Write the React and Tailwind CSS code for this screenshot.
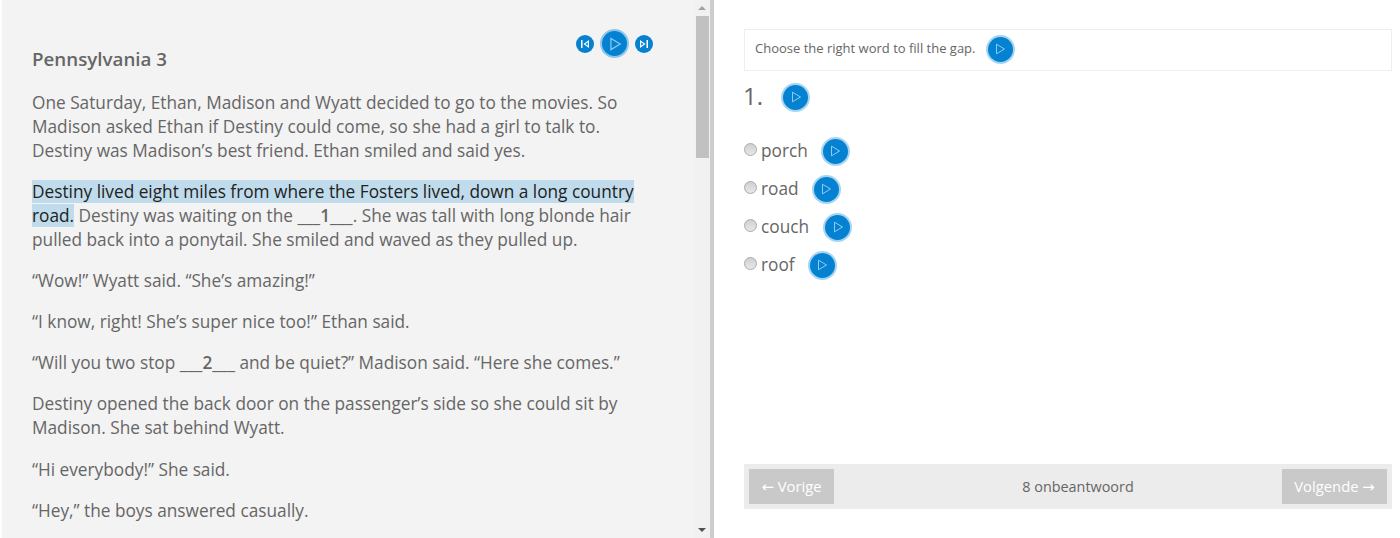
const font = { fontFamily: '"Open Sans", sans-serif' };
const arrowFont = { fontFamily: '"DejaVu Sans", sans-serif' };

const PlayIcon = ({ size = 12 }) => (
  <svg width={size} height={size} viewBox="0 0 12 12" fill="none" stroke="#8fcdf0" strokeWidth="1">
    <path d="M2.5 1.2 L10.5 6 L2.5 10.8 Z" />
  </svg>
);

const PlayButton = ({ className = '' }) => (
  <button className={`flex h-[29px] w-[29px] shrink-0 items-center justify-center rounded-full border-[2px] border-[#a5d5f0] bg-[#0482d1] ${className}`}>
    <PlayIcon />
  </button>
);

const SkipButton = ({ flip }) => (
  <button className="flex h-[18px] w-[18px] items-center justify-center rounded-full bg-[#0482d1]">
    <svg width="10" height="10" viewBox="0 0 10 10" fill="#fff" className={flip ? 'rotate-180' : ''}>
      <rect x="1" y="1" width="1.5" height="8" />
      <path d="M9 1 L9 9 L3.5 5 Z M7.8 3.2 L5.4 5 L7.8 6.8 Z" fillRule="evenodd" />
    </svg>
  </button>
);

const Story = () => (
  <div className="relative flex-1 overflow-hidden pl-[30px] pr-[58px] pt-[46px] text-[17.25px] leading-[24px] text-[#666]">
    <div className="absolute left-[574px] top-[29px] flex items-center gap-[2px]">
      <SkipButton />
      <button className="mx-[4px] flex h-[29px] w-[29px] items-center justify-center rounded-full border-[2px] border-[#8cc7ea] bg-[#0482d1]">
        <PlayIcon size={14} />
      </button>
      <SkipButton flip />
    </div>
    <h3 className="mb-[19px] text-[18.75px] font-semibold leading-[26px]">Pennsylvania 3</h3>
    <p className="mb-[17.1px]">
      One Saturday, Ethan, Madison and Wyatt decided to go to the movies. So Madison asked Ethan if Destiny could come, so she had a girl to talk to. Destiny was Madison’s best friend. Ethan smiled and said yes.
    </p>
    <p className="mb-[17.1px]">
      <span className="bg-[#c0dcec] text-[#222]">Destiny lived eight miles from where the Fosters lived, down a long country road.</span>{' '}
      Destiny was waiting on the ___<b className="font-semibold">1</b>___. She was tall with long blonde hair pulled back into a ponytail. She smiled and waved as they pulled up.
    </p>
    <p className="mb-[17.1px]">“Wow!” Wyatt said. “She’s amazing!”</p>
    <p className="mb-[17.1px]">“I know, right! She’s super nice too!” Ethan said.</p>
    <p className="mb-[17.1px]">
      “Will you two stop ___<b className="font-semibold">2</b>___ and be quiet?” Madison said. “Here she comes.”
    </p>
    <p className="mb-[17.1px]">
      Destiny opened the back door on the passenger’s side so she could sit by Madison. She sat behind Wyatt.
    </p>
    <p className="mb-[17.1px]">“Hi everybody!” She said.</p>
    <p className="mb-[17.1px]">“Hey,” the boys answered casually.</p>
  </div>
);

const Scrollbar = () => (
  <div className="flex w-[16px] shrink-0 flex-col items-center bg-[#f1f1f1]">
    <div className="mt-[6px] h-0 w-0 border-x-[4px] border-b-[4px] border-x-transparent border-b-[#a3a3a3]" />
    <div className="mt-[6px] h-[142px] w-[13px] bg-[#c1c1c1]" />
    <div className="mt-auto mb-[6px] h-0 w-0 border-x-[4px] border-t-[4px] border-x-transparent border-t-[#505050]" />
  </div>
);

const options = [
  { label: 'porch', gap: 'ml-[13px]' },
  { label: 'road', gap: 'ml-[13px]' },
  { label: 'couch', gap: 'ml-[14px]' },
  { label: 'roof', gap: 'ml-[13px]' },
];

const Option = ({ label, gap }) => (
  <div className="flex h-[38px] items-center">
    <span className="mb-[4px] h-[13px] w-[13px] rounded-full border border-[#aaa] bg-gradient-to-b from-[#d0d0d0] to-[#e8e8e8]" />
    <span className="mb-[1px] ml-[4px] text-[17.25px] text-[#666]">{label}</span>
    <PlayButton className={gap} />
  </div>
);

const Question = () => (
  <div className="flex flex-1 flex-col pb-[29px] pl-[30px] pr-[8px] pt-[29px]">
    <div className="flex h-[42px] items-center border border-[#eee] pb-[2px] pl-[10px] text-[13px] text-[#666]">
      Choose the right word to fill the gap.
      <PlayButton className="ml-[10px]" />
    </div>
    <div className="mt-[11px] flex h-[30px] items-center text-[24px] leading-[28px] text-[#666]">
      <span className="-ml-[1px] -translate-y-[1px]">1.</span>
      <PlayButton className="ml-[18px]" />
    </div>
    <div className="mt-[20px]">
      {options.map((opt) => (
        <Option key={opt.label} {...opt} />
      ))}
    </div>
    <div className="mt-auto flex h-[45px] items-center justify-between bg-[#ececec] px-[5px]">
      <button className="h-[35px] w-[85px] bg-[#c9c9c9] pt-[1px] text-[14.8px] text-white">
        <span style={arrowFont}>←</span> Vorige
      </button>
      <span className="pl-[40px] text-[14.4px] text-[#666]">8 onbeantwoord</span>
      <button className="h-[35px] w-[105px] bg-[#c9c9c9] pt-[1px] text-[14.8px] text-white">
        Volgende <span style={arrowFont}>→</span>
      </button>
    </div>
  </div>
);

export default function App() {
  return (
    <div className="flex h-[538px] w-[1400px] overflow-hidden bg-white" style={font}>
      <div className="ml-[2px] flex w-[708px] shrink-0 bg-[#f3f3f3]">
        <Story />
        <Scrollbar />
      </div>
      <div className="w-[4px] shrink-0 bg-[#cdcdcd]" />
      <Question />
    </div>
  );
}
